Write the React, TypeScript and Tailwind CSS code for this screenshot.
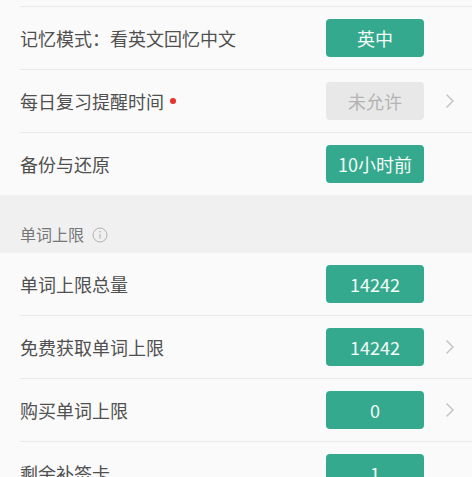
import React from "react";

const font = { fontFamily: '"Noto Sans CJK SC", "Noto Sans", sans-serif' };

function Chevron() {
  return (
    <svg width="12" height="18" viewBox="0 0 12 18" className="ml-[20px]">
      <path d="M3 3 L9 9 L3 15" fill="none" stroke="#c4c4c4" strokeWidth="1.5" strokeLinecap="round" strokeLinejoin="round" />
    </svg>
  );
}

function Row({
  label,
  value,
  chevron,
  disabled,
  dot,
  divider = true,
}: {
  label: string;
  value: string;
  chevron?: boolean;
  disabled?: boolean;
  dot?: boolean;
  divider?: boolean;
}) {
  return (
    <div className="bg-[#fafafa]">
      <div className="h-[62px] flex items-center pl-[20px]">
        <div className="flex-1 flex items-center text-[18px] text-[#505050] leading-none">
          <span>{label}</span>
          {dot && <span className="ml-[6px] w-[6px] h-[6px] rounded-full bg-[#e8322b]" />}
        </div>
        <div
          className={
            disabled
              ? "w-[98px] h-[38px] rounded-[4px] bg-[#e8e8e8] text-[#b4b4b4] flex items-center justify-center text-[18px]"
              : "w-[98px] h-[38px] rounded-[4px] bg-[#35a98d] text-[#f4fbf9] flex items-center justify-center text-[18px]"
          }
        >
          {value}
        </div>
        <div className="w-[48px] flex items-center">{chevron && <Chevron />}</div>
      </div>
      {divider && (
        <div className="pl-[20px]">
          <div className="h-px bg-[#e9e9e9]" />
        </div>
      )}
    </div>
  );
}

export default function App() {
  return (
    <div className="w-[472px] h-[477px] overflow-hidden bg-[#f0f0f0]" style={font}>
      <div className="bg-[#fafafa] h-[6px]" />
      <div className="bg-[#fafafa] pl-[20px]">
        <div className="h-px bg-[#e9e9e9]" />
      </div>
      <Row label="记忆模式：看英文回忆中文" value="英中" />
      <Row label="每日复习提醒时间" value="未允许" disabled dot chevron />
      <Row label="备份与还原" value="10小时前" divider={false} />
      <div className="h-[58px] flex items-end pb-[11px] pl-[20px] bg-[#f0f0f0]">
        <span className="text-[16px] leading-none text-[#777777]">单词上限</span>
        <svg width="16" height="16" viewBox="0 0 16 16" className="ml-[8px] mb-[-1px]">
          <circle cx="8" cy="8" r="7" fill="none" stroke="#b0b0b0" strokeWidth="1" />
          <circle cx="8" cy="4.8" r="0.8" fill="#b0b0b0" />
          <path d="M8 7 V11.5" stroke="#b0b0b0" strokeWidth="1.1" />
        </svg>
      </div>
      <Row label="单词上限总量" value="14242" />
      <Row label="免费获取单词上限" value="14242" chevron />
      <Row label="购买单词上限" value="0" chevron />
      <Row label="剩余补签卡" value="1" />
    </div>
  );
}
